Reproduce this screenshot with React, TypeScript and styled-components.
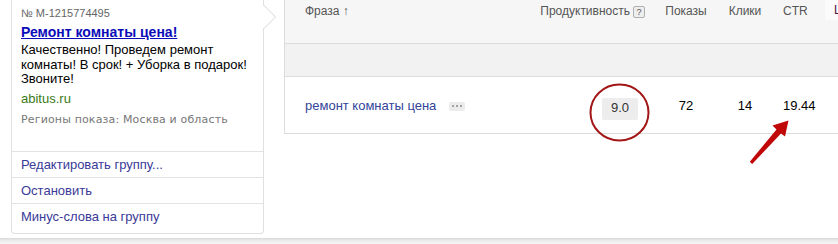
import React from "react";
import styled, { createGlobalStyle } from "styled-components";

const GlobalStyle = createGlobalStyle`
  html, body {
    margin: 0;
    padding: 0;
    background: #fff;
    overflow: hidden;
  }
  body {
    font-family: "Liberation Sans", Arial, sans-serif;
  }
`;

const COLUMNS = "235px 135px 62px 56px 49px 1fr";

const Page = styled.div`
  position: relative;
  width: 838px;
  height: 244px;
  overflow: hidden;
`;

const Main = styled.div`
  display: flex;
  align-items: flex-start;
  height: 238px;
  padding-left: 11px;
`;

const AdCard = styled.div`
  position: relative;
  width: 253px;
  box-sizing: border-box;
  flex-shrink: 0;
  border: 1px solid #e0e0e0;
  border-top: none;
  border-radius: 0 0 4px 4px;
  padding-bottom: 4px;
`;

const Notch = styled.svg`
  position: absolute;
  left: 100%;
  top: 5px;
  width: 14px;
  height: 26px;
`;

const Preview = styled.div`
  padding: 5px 9px 24px;
`;

const AdNumber = styled.div`
  font-size: 11px;
  line-height: 16px;
  color: #666;
`;

const AdTitle = styled.a`
  display: block;
  margin-top: 2px;
  font-size: 14px;
  line-height: 18px;
  font-weight: bold;
  color: #0c0cb8;
  text-decoration: underline;
`;

const AdText = styled.div`
  margin-top: 2px;
  font-size: 13px;
  line-height: 14.5px;
  color: #000;
`;

const AdDomain = styled.div`
  margin-top: 4px;
  font-size: 13px;
  line-height: 15px;
  color: #3a7a18;
`;

const AdRegions = styled.div`
  margin-top: 6px;
  font-family: "DejaVu Sans", Verdana, sans-serif;
  font-size: 11px;
  line-height: 15px;
  letter-spacing: 0.15px;
  color: #777;
`;

const ActionLink = styled.a`
  display: block;
  height: 25px;
  line-height: 25px;
  border-top: 1px solid #e3e3e3;
  padding-left: 9px;
  font-size: 13px;
  color: #3a3a98;
  text-decoration: none;
`;

const Table = styled.div`
  flex: none;
  width: 600px;
  margin-left: 20px;
  border-left: 1px solid #dcdcdc;
`;

const Row = styled.div<{ $bg: string; $height: number }>`
  display: grid;
  grid-template-columns: ${COLUMNS};
  height: ${(p) => p.$height}px;
  background: ${(p) => p.$bg};
  border-bottom: 1px solid #dcdcdc;
`;

const HeadCell = styled.div<{ $align?: string; $pad?: string }>`
  display: flex;
  align-items: flex-start;
  justify-content: ${(p) => p.$align || "flex-start"};
  padding: ${(p) => p.$pad || "0"};
  padding-top: 1px;
  font-size: 12px;
  line-height: 20px;
  color: #555;
  white-space: nowrap;
`;

const PriceHead = styled.div`
  margin-left: 3px;
  height: 20px;
  padding-left: 9px;
  background: #fbfbfb;
  font-size: 12px;
  line-height: 21px;
  color: #4a1440;
  overflow: hidden;
`;

const Help = styled.span`
  display: inline-block;
  box-sizing: border-box;
  width: 12px;
  height: 12px;
  margin: 5px 0 0 3px;
  border: 1px solid #b0b0b0;
  border-radius: 2px;
  background: #eee;
  font-size: 9px;
  line-height: 10px;
  text-align: center;
  color: #555;
`;

const Cell = styled.div<{ $align?: string; $pad?: string }>`
  display: flex;
  align-items: center;
  justify-content: ${(p) => p.$align || "flex-start"};
  padding: ${(p) => p.$pad || "0"};
  font-size: 13px;
  color: #000;
  white-space: nowrap;
`;

const PhraseLink = styled.a`
  color: #33449a;
  text-decoration: none;
`;

const MoreButton = styled.span`
  display: inline-flex;
  align-items: center;
  justify-content: center;
  gap: 2px;
  width: 16px;
  height: 9px;
  margin-left: 13px;
  margin-top: 2px;
  background: #ececec;
  border-radius: 2px;
`;

const Dot = styled.i`
  width: 2px;
  height: 2px;
  border-radius: 1px;
  background: #8a8a8a;
`;

const Score = styled.span`
  display: inline-block;
  width: 36px;
  height: 22px;
  margin-top: 7px;
  line-height: 19px;
  text-align: center;
  background: #ededed;
  border-radius: 2px;
  color: #333;
`;

const Footer = styled.div`
  height: 6px;
  background: linear-gradient(#d8d8d8, #ebebeb 40%, #f6f6f6);
`;

const Annotations = styled.svg`
  position: absolute;
  left: 0;
  top: 0;
  pointer-events: none;
`;

const actions = ["Редактировать группу...", "Остановить", "Минус-слова на группу"];

export default function App() {
  return (
    <Page>
      <GlobalStyle />
      <Main>
        <AdCard>
          <Notch viewBox="0 0 14 26">
            <polygon points="0,0 12,12 0,24" fill="#fff" />
            <polyline points="0.5,0 12.5,12 0.5,24" fill="none" stroke="#d6d6d6" strokeWidth="1" />
          </Notch>
          <Preview>
            <AdNumber>№ M-1215774495</AdNumber>
            <AdTitle href="#">Ремонт комнаты цена!</AdTitle>
            <AdText>
              Качественно! Проведем ремонт
              <br />
              комнаты! В срок! + Уборка в подарок!
              <br />
              Звоните!
            </AdText>
            <AdDomain>abitus.ru</AdDomain>
            <AdRegions>Регионы показа: Москва и область</AdRegions>
          </Preview>
          {actions.map((a) => (
            <ActionLink key={a} href="#">
              {a}
            </ActionLink>
          ))}
        </AdCard>

        <Table>
          <Row $bg="#f6f6f6" $height={43}>
            <HeadCell $pad="0 0 0 20px">Фраза ↑</HeadCell>
            <HeadCell $align="flex-end" $pad="0 10px 0 0">
              Продуктивность<Help>?</Help>
            </HeadCell>
            <HeadCell $align="center">Показы</HeadCell>
            <HeadCell $align="center">Клики</HeadCell>
            <HeadCell $pad="0 0 0 10px">CTR</HeadCell>
            <PriceHead>Цена</PriceHead>
          </Row>
          <Row $bg="#f2f2f2" $height={32} />
          <Row $bg="#fff" $height={56}>
            <Cell $pad="0 0 0 20px">
              <PhraseLink href="#">ремонт комнаты цена</PhraseLink>
              <MoreButton>
                <Dot />
                <Dot />
                <Dot />
              </MoreButton>
            </Cell>
            <Cell $align="flex-end" $pad="0 17px 0 0">
              <Score>9.0</Score>
            </Cell>
            <Cell $align="center">72</Cell>
            <Cell $align="center">14</Cell>
            <Cell $pad="0 0 0 10px">19.44</Cell>
            <Cell />
          </Row>
        </Table>
      </Main>
      <Footer />

      <Annotations width="838" height="244" viewBox="0 0 838 244">
        <ellipse cx="619.5" cy="112.5" rx="29" ry="28" fill="none" stroke="#a31616" strokeWidth="2" />
        <polygon
          points="749.8,161.8 776.5,129.5 772.5,125.5 788.5,120.5 785,136.5 781,133.5 752.2,164"
          fill="#c00808"
        />
      </Annotations>
    </Page>
  );
}
